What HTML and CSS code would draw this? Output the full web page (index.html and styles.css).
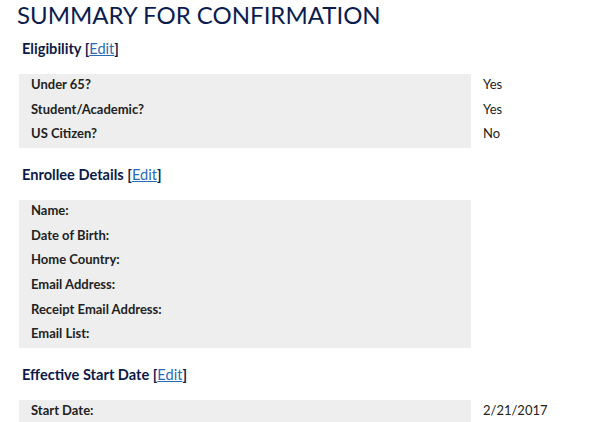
FILE: index.html
```html
<!DOCTYPE html>
<html>
<head>
<meta charset="utf-8">
<link rel="stylesheet" href="styles.css">
</head>
<body>
<div class="page">
  <h1 class="title">SUMMARY FOR CONFIRMATION</h1>

  <h2 class="section">Eligibility [<a href="#" class="edit">Edit</a>]</h2>
  <div class="summary">
    <div class="label">Under 65?</div><div class="value">Yes</div>
    <div class="label">Student/Academic?</div><div class="value">Yes</div>
    <div class="label">US Citizen?</div><div class="value">No</div>
  </div>

  <h2 class="section">Enrollee Details [<a href="#" class="edit">Edit</a>]</h2>
  <div class="summary">
    <div class="label">Name:</div><div class="value"></div>
    <div class="label">Date of Birth:</div><div class="value"></div>
    <div class="label">Home Country:</div><div class="value"></div>
    <div class="label">Email Address:</div><div class="value"></div>
    <div class="label">Receipt Email Address:</div><div class="value"></div>
    <div class="label">Email List:</div><div class="value"></div>
  </div>

  <h2 class="section">Effective Start Date [<a href="#" class="edit">Edit</a>]</h2>
  <div class="summary">
    <div class="label">Start Date:</div><div class="value">2/21/2017</div>
  </div>
</div>
</body>
</html>
```

FILE: styles.css
```css
html, body {
  margin: 0;
  padding: 0;
  background: #ffffff;
}

body {
  font-family: Lato, "Open Sans", sans-serif;
  color: #222222;
  overflow: hidden;
}

.page {
  padding: 0 0 0 19px;
}

.title {
  margin: 0 0 0 -2px;
  font-size: 24px;
  font-weight: 400;
  line-height: 30px;
  color: #0b1d4f;
}

.section {
  margin: 9px 0 15px 3px;
  font-size: 14.6px;
  font-weight: 700;
  line-height: 20px;
  color: #0c1a48;
}

.summary + .section {
  margin-top: 17px;
}

.edit {
  color: #2a6ab5;
  font-weight: 400;
  text-decoration: underline;
}

.summary {
  display: grid;
  grid-template-columns: 452px 1fr;
}

.label {
  background: #eeeeee;
  padding: 1px 12px 5px;
  line-height: 18.67px;
  font-size: 13px;
  font-weight: 700;
  color: #222222;
}

.value {
  padding: 1px 12px 5px;
  line-height: 18.67px;
  font-size: 13px;
  color: #222222;
}
```
